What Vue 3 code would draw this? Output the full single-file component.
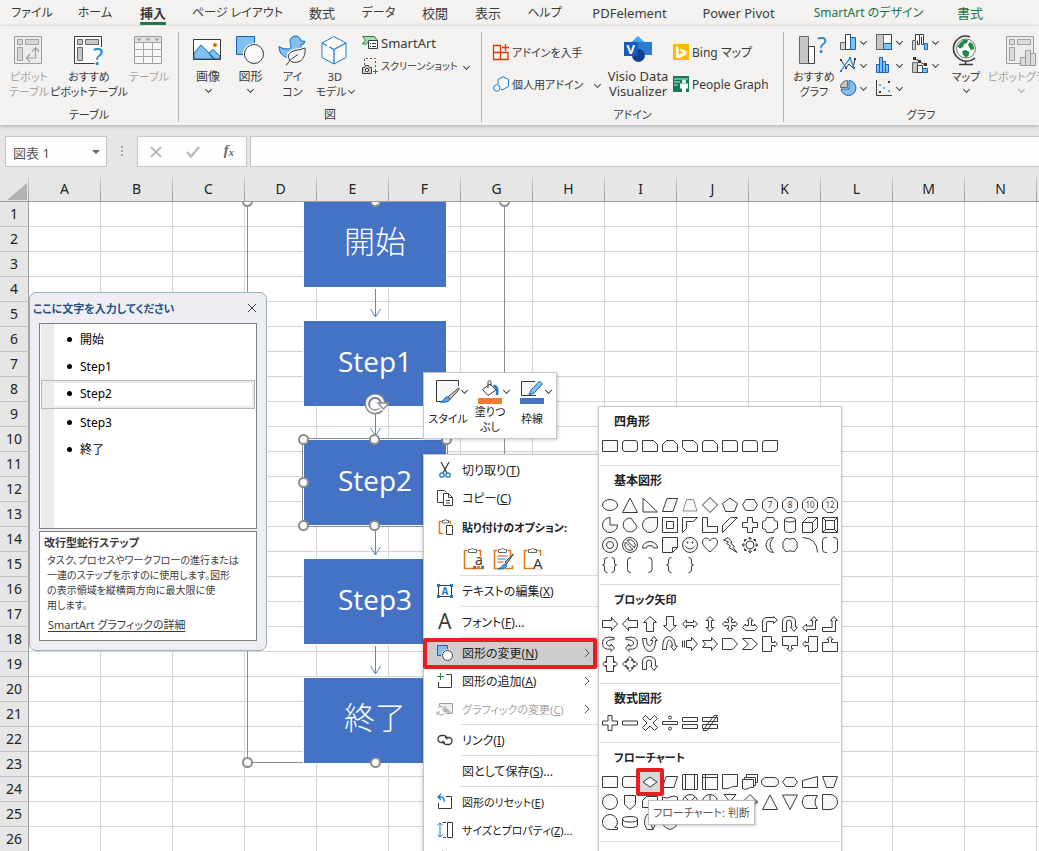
<script setup>
const tabs = [
  { text: 'ファイル', kind: 'kana' }, { text: 'ホーム', kind: 'kana' }, { text: '挿入', kind: 'active' }, { text: 'ページ レイアウト', kind: 'kana' },
  { text: '数式' }, { text: 'データ', kind: 'kana' }, { text: '校閲' }, { text: '表示' }, { text: 'ヘルプ', kind: 'kana' },
  { text: 'PDFelement' }, { text: 'Power Pivot' },
  { text: 'SmartArt のデザイン', kind: 'context kana' }, { text: '書式', kind: 'context' },
]

const columns = [...'ABCDEFGHIJKLMN', '']
const steps = ['開始', 'Step1', 'Step2', 'Step3', '終了']

const globe = `<circle cx="14" cy="12.500" r="9.500" fill="#fff" stroke="#767676"/>
<path d="M8 7l4-3.500 4 .5-1 3-3 1-1 3-3 1.500-2.500-2zM18 6l3 2 1.500 5-3.500 1-2-3-1-2.500zM10 15l4-1 3.500 2-1 4-3 1.500-2.500-3z" fill="#1f8a43"/>
<path d="M18 .8A13 13 0 0 0 4 5a12 12 0 0 0 1 16 13 13 0 0 0 18 1M13.500 25v3M7 28.500h14" fill="none" stroke="#3b3a39" stroke-width="1.500"/>`

const clip = `<path d="M3.500 3.500h-3v18h18v-3M13.500 3.500h3v6" fill="none" stroke="#e07b16" stroke-width="1.600"/><path d="M4.500 5.500v-3h2.500q1.500-3 3 0h2.500v3z" fill="#fff" stroke="#666"/>`

const icons = {
  pivot: `<path d="M.5.5h27v27H.5z" fill="#ececec" stroke="#9b9b9b"/><path d="M3.500 3.500h5v5h-5zM11.500 3.500h13v5h-13zM3.500 11.500h5v13h-5z" fill="#d6d6d6" stroke="#a0a0a0"/><path d="M16 18l-3.500 4 3.500 4M12.500 22h9V12M18 15.500l3.500-4 3.500 4" fill="none" stroke="#a0a0a0" stroke-width="1.200"/>`,
  pivotHint: `<path d="M.5.5h27v27H.5z" fill="#fafafa"/><path d="M27.500 11V.5H.5v27h20" fill="none" stroke="#3b3a39"/><path d="M3.500 3.500h5v5h-5zM11.500 3.500h13v5h-13zM3.500 11.500h5v13h-5z" fill="#c8c6c4" stroke="#666"/><text x="19" y="29" font-size="23" fill="#1e8bcd">?</text>`,
  table: `<path d="M.5.5h27v27H.5z" fill="#f7f7f7" stroke="#9b9b9b"/><path d="M1 1h26v5H1z" fill="#dedede"/><path d="M.5 6.500h27M.5 13.500h27M.5 20.500h27M9.500 6v21M18.500 6v21" stroke="#a6a6a6" fill="none"/><path d="M2.500 2.500h5L5 5zM11.500 2.500h5L14 5zM20.500 2.500h5L23 5z" fill="#9b9b9b"/>`,
  picture: `<path d="M.5 3.500h27v20H.5z" fill="#fff"/><path d="M1 17l7-8 14 14H1zM16 17l4-3.500 7 6.500v3H20z" fill="#83beec" stroke="#1068b5"/><circle cx="22" cy="9" r="2" fill="#e06c00"/><path d="M.5 3.500h27v20H.5z" fill="none" stroke="#3b3a39"/>`,
  shapes: `<path d="M.5.5h18v18H.5z" fill="#83beec" stroke="#1068b5"/><circle cx="18" cy="18" r="11" fill="#f3f2f1"/><circle cx="18" cy="18" r="9.500" fill="#fafafa" stroke="#3b3a39"/>`,
  duck: `<path d="M12 6a5.500 5.500 0 0 1 11-1l4 .3q-.5 3.500-4.500 3.700c0 2 2.500 3 2.500 6 0 6-5 7.500-9 7.500C6 22.500 1 18 1 10.500q4 3 9 2.500c4-.5 3-3 2-7z" fill="#83beec" stroke="#1068b5"/><path d="M12 25q-5-8 5-10.500 5-.5 10-2.500c1 9-4 17-14 13.500M8 29.500q5-8 12-11" fill="#f3f2f1" stroke="#f3f2f1" stroke-width="3.500"/><path d="M12 25q-5-8 5-10.500 5-.5 10-2.500c1 9-4 17-14 13.500" fill="#fafafa" stroke="#3b3a39"/><path d="M8 29.500q5-8 12-11" fill="none" stroke="#3b3a39"/>`,
  cube: `<path d="M14 .5l12 6.500v14.500L14 28 2 21.500V7z" fill="#fafafa" stroke="#1e7bc8"/><path d="M2 7l5 2.700M14 13.500V28M14 13.500L26 7M14 13.500l-4.500-2.400" fill="none" stroke="#1e7bc8" stroke-width="1.300"/>`,
  smartart: `<path d="M.5 1.500h12l3 4h-8l-3 3.500h-4l3-4z" fill="#a8dbb5" stroke="#218242"/><path d="M6.500 5.500h9v8h-9z" fill="#fff" stroke="#3b3a39"/><path d="M8 8.500h1M10 8.500h4M8 11.500h1M10 11.500h4" stroke="#3b3a39"/>`,
  screenshot: `<path d="M2.500 7V.5h11v10" fill="none" stroke="#555" stroke-dasharray="2 2"/><path d="M.5 9.500h2l1-2h3l1 2h2v6h-9z" fill="#d0d0d0" stroke="#3b3a39"/><circle cx="5" cy="12" r="1.700" fill="#fff" stroke="#3b3a39"/><path d="M13.500 11v5M11 13.500h5" stroke="#218242"/>`,
  getAddin: `<path d="M.5 1.500h7v14h-7zM.5 8.500h14.500v7H.5zM12.500 0v7M9 3.500h7" fill="none" stroke="#d83b01" stroke-width="1.300"/>`,
  myAddin: `<path d="M5 8V3.500L10 .7l5.500 2.800v7L10 13.500H8" fill="#fafafa" stroke="#1e7bc8"/><circle cx="3.800" cy="12" r="3.200" fill="#fafafa" stroke="#1e7bc8"/>`,
  visio: `<path d="M14 0l7 6.500-7 6.500-7-6.500z" fill="#41a5ee"/><path d="M14 6h14v13H14z" fill="#2b7cd3"/><circle cx="14.500" cy="19.500" r="6.500" fill="#103f91"/><path d="M0 6h14v14H0z" fill="#185abd"/><text x="2.500" y="18" font-size="13" font-weight="700" fill="#fff">V</text>`,
  bing: `<path d="M0 0h16v16H0z" fill="#ffb900"/><path d="M3 2l2.500 1v7.500l5-2-3-1.300L7 4.500l6.500 3v3l-8 4L3 13z" fill="#fff"/>`,
  people: `<path d="M0 0h16v16H0z" fill="#107c5a"/><path d="M1 3h14M1 6h6M1 9h4" stroke="#c5e6d8" stroke-width="1.200"/><circle cx="11" cy="5.500" r="2" fill="#fff"/><path d="M7 7.500h8v5h-2V16H9v-3.500H7z" fill="#fff"/>`,
  chartHint: `<path d="M.5.5h9v27h-9z" fill="#c8c6c4" stroke="#666"/><path d="M9.500 10.500h6v17h-6z" fill="#fff" stroke="#3b3a39"/><text x="18" y="17" font-size="22" fill="#1e8bcd">?</text>`,
  barChart: `<path d="M.5 8.500h5v7h-5z" fill="#d2d0ce" stroke="#666"/><path d="M5.500.5h5v15h-5z" fill="#fff" stroke="#3b3a39"/><path d="M10.500 3.500h5v12h-5z" fill="#83beec" stroke="#1068b5"/>`,
  treemap: `<path d="M.5.5h15v15H.5z" fill="#fff" stroke="#3b3a39"/><path d="M.5.5h7v15h-7z" fill="#c8c6c4" stroke="#666"/><path d="M7.500 9.500h8v6h-8z" fill="#83beec" stroke="#1068b5"/>`,
  waterfall: `<path d="M.5 15.500v-9h3v9z" fill="#d2d0ce" stroke="#666"/><path d="M3.500 6.500v-6h4v10h-2v-4M7.500.5h4v10h-2V3" fill="#fff" stroke="#3b3a39"/><path d="M12.500 9.500h3v6h-3z" fill="#83beec" stroke="#1068b5"/>`,
  lineChart: `<path d="M1 3l5 8 3-4 4 4 2-9" fill="none" stroke="#3b3a39"/><path d="M1 14l9-13 4 10" fill="none" stroke="#1e8bcd" stroke-width="1.300"/><path d="M0 2h2v2H0zM14 1h2v2h-2zM5 10h2v2H5z" fill="#3b3a39"/><path d="M0 13h2v2H0zM9 0h2v2H9zM13 10h2v2h-2z" fill="#1e7bc8"/>`,
  histogram: `<path d="M.5 15.500v-8h3v8zM3.500 15.500V.5h3v15zM6.500 15.500v-11h3v11zM9.500 15.500v-8h3v8z" fill="#83beec" stroke="#1068b5"/>`,
  combo: `<path d="M.5 5.500h5v10h-5z" fill="#c8c6c4" stroke="#666"/><path d="M5.500 8.500h5v7h-5z" fill="#fff" stroke="#3b3a39"/><path d="M10.500 11.500h5v4h-5z" fill="#83beec" stroke="#1068b5"/><path d="M2 1l6 4 5 3" fill="none" stroke="#3b3a39"/><path d="M1 0h3v3H1zM6 3h3v3H6zM12 6h3v3h-3z" fill="#3b3a39"/>`,
  pieChart: `<path d="M9 .5a7.500 7.500 0 1 1-8 8.500h8z" fill="#83beec" stroke="#1068b5"/><path d="M7.500 7.500h-7a7 7 0 0 1 7-7z" fill="#c8c6c4" stroke="#666"/>`,
  scatter: `<path d="M.5 0v15.500H16" fill="none" stroke="#3b3a39"/><path d="M3 11h2v2H3zM12 1h2v2h-2z" fill="#3b3a39"/><path d="M3 4h2v2H3zM7 7h2v2H7zM12 10h2v2h-2z" fill="#68aee6"/>`,
  map: globe,
  pivotChart: `<path d="M.5.5h27v27H.5z" fill="#ececec" stroke="#9b9b9b"/><path d="M3.500 3.500h5v5h-5zM11.500 3.500h13v5h-13zM3.500 11.500h5v13h-5z" fill="#dcdcdc" stroke="#a0a0a0"/><path d="M14.500 21.500h5v8h-5zM19.500 14.500h5v15h-5zM24.500 17.500h5v12h-5z" fill="#dcdcdc" stroke="#9b9b9b"/>`,
  style: `<path d="M22.500 6V.5H.5v21H5" fill="#f8f8f8" stroke="#3b3a39"/><path d="M22.500 8L12 17l2 2.500L23.500 9z" fill="#ccc" stroke="#3b3a39"/><path d="M4 22q4-1 5-4 3-3 5 1-1 4-10 3z" fill="#57a5dd" stroke="#1068b5"/>`,
  fill: `<path d="M4.500 9.500L12 4l6 6-8 5.500z" fill="#fafafa" stroke="#3b3a39"/><path d="M10 8V1.500q2-2 3 0V6" fill="none" stroke="#3b3a39"/><path d="M15.500 5.500q5 1 3.500 9.500" fill="none" stroke="#1e7bc8" stroke-width="2.500"/><path d="M0 18h24v6H0z" fill="#ed7d31"/>`,
  outline: `<path d="M15 1.500H1.500v14H16" fill="#f8f8f8" stroke="#3b3a39"/><path d="M9 15l2-5L19.500 1l3 3L14 13z" fill="#83beec" stroke="#1068b5"/><path d="M0 18h24v6H0z" fill="#4472c4"/>`,
  cut: `<path d="M4 0l6 11M12 0L6 11" fill="none" stroke="#3b3a39" stroke-width="1.300"/><circle cx="5" cy="13" r="2.200" fill="#fff" stroke="#1e7bc8" stroke-width="1.300"/><circle cx="11" cy="13" r="2.200" fill="#fff" stroke="#1e7bc8" stroke-width="1.300"/>`,
  copy: `<path d="M6.500 12.500h-6V.5h7l2 2" fill="none" stroke="#3b3a39"/><path d="M6.500 3.500h5l4 4v8h-9zM11.500 3.500v4h4M9 10.500h4M9 13h4" fill="#fff" stroke="#3b3a39"/>`,
  paste: `<path d="M6 14.500H2.500v-12H5M11 2.500h2.500V5" fill="none" stroke="#e07b16" stroke-width="1.500"/><path d="M5.500 4V1.500h1.500q1.500-2 3 0h1.500V4z" fill="#fff" stroke="#666"/><path d="M9.500 6.500h6v9h-6z" fill="#fff" stroke="#3b3a39"/>`,
  textEdit: `<path d="M1.500 2.500h13v11h-13z" fill="#fff" stroke="#3b3a39"/><path d="M0 1h3v3H0zM13 1h3v3h-3zM0 12h3v3H0zM13 12h3v3h-3z" fill="#1e7bc8"/><text x="4.500" y="11.500" font-size="10" font-weight="700" fill="#1e7bc8">A</text>`,
  font: `<text x="1" y="15" font-size="21" fill="#3b3a39">A</text>`,
  change: `<path d="M.5.5h10v10H.5z" fill="#83beec" stroke="#1068b5"/><circle cx="10.500" cy="10.500" r="6" fill="#fff" stroke="#d0d0d0"/><circle cx="10.500" cy="10.500" r="5" fill="#fff" stroke="#3b3a39"/>`,
  add: `<path d="M3.500 0v7M0 3.500h7" stroke="#218242"/><path d="M9 1.500h5.500v13h-13V9" fill="none" stroke="#3b3a39"/>`,
  graphic: `<path d="M2.500 5V2.500h13v10H9" fill="#efefef" stroke="#a0a0a0"/><path d="M6 11l3-4 6 5z" fill="#b4b4b4"/><path d="M1 7.500q1-3 4-2l3 3M7 12q-1 3-4 2l-3-3M8 5v4H5M0 14v-3h3" fill="none" stroke="#a0a0a0"/>`,
  link: `<path d="M8 10.500H4.500a3.500 3.500 0 0 1 0-7h2a3.500 3.500 0 0 1 3.500 4M8 5.500h3.500a3.500 3.500 0 0 1 0 7h-2a3.500 3.500 0 0 1-3.500-4" fill="none" stroke="#3b3a39" stroke-width="1.300"/>`,
  reset: `<path d="M9 2.500h5.500v12h-13V9" fill="none" stroke="#3b3a39"/><path d="M4 0L1 3l3 3M1 3h3q4 1 3 5" fill="none" stroke="#1e7bc8" stroke-width="1.300"/>`,
  size: `<path d="M.5 3.500L3 .8l2.500 2.700M3 1v14M.5 12.500L3 15.200l2.500-2.700" fill="none" stroke="#1e7bc8"/><path d="M6 .5h3M6 15.500h3" stroke="#3b3a39" /><path d="M10.500.5h5v15h-5z" fill="#fff" stroke="#3b3a39"/>`,
  format: `<path d="M4 3q1-4 4 0M1.500 5.500h13v10h-13z" fill="#fafafa" stroke="#3b3a39"/>`,
  pasteTheme: clip + `<text x="11" y="18" font-size="14" fill="#3b3a39">a</text><path d="M9 19h3v3H9z" fill="#e8373e"/><path d="M13 19h3v3h-3z" fill="#e07b16"/><path d="M17 19h3v3h-3z" fill="#1e8bcd"/>`,
  pasteKeep: clip + `<path d="M3.500 9h10" stroke="#e8373e"/><path d="M3.500 12h8" stroke="#1e7bc8"/><path d="M3.500 15h6" stroke="#e8373e"/><path d="M19.500 7L11 15l1.500 2z" fill="#bbb" stroke="#3b3a39"/><path d="M4 22q4-1 5-4 3-2 4 .5Q12 22 4 22z" fill="#57a5dd" stroke="#1068b5"/>`,
  pasteText: clip + `<path d="M10 9h10v13H10z" fill="#fff"/><text x="9" y="22" font-size="15" fill="#3b3a39">A</text>`,
}

const charts = ['barChart', 'treemap', 'waterfall', 'lineChart', 'histogram', 'combo', 'pieChart', 'scatter']

const menuTop = [
  { icon: 'cut', text: '切り取り', key: 'T' },
  { icon: 'copy', text: 'コピー', key: 'C' },
]
const menuRest = [
  { icon: 'textEdit', text: 'テキストの編集', key: 'X', line: true },
  { icon: 'font', text: 'フォント', key: 'F', tail: '...', line: true },
  { icon: 'change', text: '図形の変更', key: 'N', sub: true, hot: true, line: true },
  { icon: 'add', text: '図形の追加', key: 'A', sub: true },
  { icon: 'graphic', text: 'グラフィックの変更', key: 'C', sub: true, off: true, kana: true },
  { icon: 'link', text: 'リンク', key: 'I', line: true },
  { text: '図として保存', key: 'S', tail: '...', line: true },
  { icon: 'reset', text: '図形のリセット', key: 'E', line: true, kana: true },
  { icon: 'size', text: 'サイズとプロパティ', key: 'Z', tail: '...', kana: true },
]

const octagon = 'M5 .5h6l4.500 4.500v6L11 15.500H5L.5 11V5z'
const rect = 'M.5 2.500h15v11H.5z'
const circle = 'M.5 8a7.500 7.500 0 1 0 15 0a7.500 7.500 0 1 0-15 0z'
const gallery = [
  { name: '四角形', shapes: [
    rect,
    'M3 2.500h10q2.500 0 2.500 2.500v6q0 2.500-2.500 2.500H3Q.5 13.500.5 11V5Q.5 2.500 3 2.500z',
    'M.5 2.500h11l4 4v7H.5z',
    'M.5 6.500l4-4h7l4 4v7H.5z',
    'M.5 2.500h11l4 4v7h-11l-4-4z',
    'M3 2.500h8.500l4 4v7H.5V5q0-2.500 2.500-2.500z',
    'M.5 2.500H13q2.500 0 2.500 2.500v8.500H.5z',
    'M3 2.500h10q2.500 0 2.500 2.500v8.500H.5V5Q.5 2.500 3 2.500z',
    'M3 2.500h12.500V11q0 2.500-2.500 2.500H.5V5q0-2.500 2.500-2.500z',
  ] },
  { name: '基本図形', shapes: [
    'M.5 8a7.500 5.500 0 1 0 15 0a7.500 5.500 0 1 0-15 0z',
    'M8 1l7.500 14.500H.5z',
    'M1 1v14h14.500z',
    'M5 1.500h10.500L11 14.500H.5z',
    { d: 'M4.500 2.500h7l3.500 11.500H1z', pale: true },
    'M8 .5L15.500 8 8 15.500.5 8z',
    'M8 1l7.500 5.500-3 8h-9l-3-8z',
    'M4 2.500h8L15.500 8 12 13.500H4L.5 8z',
    { d: octagon, label: '7' }, { d: octagon, label: '8' }, { d: octagon, label: '10' }, { d: octagon, label: '12' },
    'M8 .5A7.500 7.500 0 1 0 15.500 8H8z',
    'M9 1A7 7 0 1 0 15 9.500z',
    'M15.500.5V8A7.500 7.500 0 1 1 8 .5z',
    'M.5.5h15v15H.5zM4.500 4.500v7h7v-7z',
    'M.5.5h15l-4 4h-7v7l-4 4z',
    'M.5.5h5v9h10v6H.5z',
    'M8.500.5h7L.5 15.500v-7z',
    'M5.500.5h5v5h5v5h-5v5h-5v-5h-5v-5h5z',
    'M4.500.5h7a4 4 0 0 0 4 4v7a4 4 0 0 0-4 4h-7a4 4 0 0 0-4-4v-7a4 4 0 0 0 4-4z',
    'M2.500 3q0-2.500 5.500-2.500T13.500 3v10q0 2.500-5.500 2.500T2.500 13zM2.500 3q0 2 5.500 2t5.500-2',
    'M.5 5.500h10v10H.5zM.5 5.500l5-5h10l-5 5M15.500.5v10l-5 5',
    'M.5.5h15v15H.5zM3.500 3.500h9v9h-9zM.5.5l3 3M15.500.5l-3 3M.5 15.500l3-3M15.500 15.500l-3-3',
    circle + 'M4.500 8a3.500 3.500 0 1 0 7 0a3.500 3.500 0 1 0-7 0z',
    circle + 'M5 3.500a5.500 5.500 0 0 1 7.500 7.500zM3.500 5a5.500 5.500 0 0 0 7.500 7.500z',
    'M.5 11a7.500 6.500 0 0 1 15 0h-4a3.500 2.500 0 0 0-7 0z',
    'M.5.5h15v10l-5 5H.5zM15.500 10.500h-5v5',
    circle + 'M3.500 9.500q4.500 5 9 0M5 5h1v1H5zM10 5h1v1h-1z',
    'M8 15Q.5 9 .5 5C.5 0 7 0 8 4c1-4 7.500-4 7.500 1Q15.500 9 8 15z',
    'M6 .5L10 5 8.500 6l4 3.500-1.500 1 4 5-8-5L8.500 9 4.500 6.500 6.500 5l-5-2z',
    'M4 8a4 4 0 1 0 8 0a4 4 0 1 0-8 0zM8 0l1.500 2h-3zM8 16l1.500-2h-3zM0 8l2-1.500v3zM16 8l-2-1.500v3zM2.500 2.500h2l-2 2zM13.500 2.500h-2l2 2zM2.500 13.500h2l-2-2zM13.500 13.500h-2l2-2z',
    'M11.500.5a7.500 7.500 0 1 0 0 15q-7-7.500 0-15z',
    'M2.500 3.500q0-2.500 3-2Q8 3 10.500 1.500q3-.5 3 2 2.500 1 1.500 4.500 1 3.500-1.500 4.500 0 2.500-3 2-2.500-1.500-5 0-3 .5-3-2Q0 11.500 1 8 0 4.500 2.500 3.500z',
    { d: 'M.5.5Q15 1 15.500 15.500', open: true },
    { d: 'M5 .5H3.500q-3 0-3 3v9q0 3 3 3H5M11 .5h1.500q3 0 3 3v9q0 3-3 3H11', open: true },
    { d: 'M5.500.5q-3 0-3 2.500v3q0 2-2 2 2 0 2 2v3q0 2.500 3 2.500M9.500.5q3 0 3 2.500v3q0 2 2 2-2 0-2 2v3q0 2.500-3 2.500', open: true },
    { d: 'M9 .5q-3.500 0-3.500 3v9q0 3 3.500 3', open: true },
    { d: 'M6.500.5q3.500 0 3.500 3v9q0 3-3.500 3', open: true },
    { d: 'M9.500.5q-3 0-3 2.500v3q0 2-2 2 2 0 2 2v3q0 2.500 3 2.500', open: true },
    { d: 'M6.500.5q3 0 3 2.500v3q0 2 2 2-2 0-2 2v3q0 2.500-3 2.500', open: true },
  ] },
  { name: 'ブロック矢印', kana: true, shapes: [
    'M.5 4.500h9v-3l6 6.500-6 6.500v-3h-9z',
    'M15.500 4.500h-9v-3L.5 8l6 6.500v-3h9z',
    'M4.500 15.500v-9h-3L8 .5l6.500 6h-3v9z',
    'M4.500.5v9h-3L8 15.500l6.500-6h-3v-9z',
    'M.5 8l4-4v2.500h7V4l4 4-4 4V9.500h-7V12z',
    'M8 .5l4 4H9.500v7H12l-4 4-4-4h2.500v-7H4z',
    'M8 .5l3 3H9.500v3h3V5l3 3-3 3V9.500h-3v3H11l-3 3-3-3h1.500v-3h-3V11l-3-3 3-3v1.500h3v-3H5z',
    'M8 1.500l3 3H9.500v5h3V8l3 3.500-3 3H3.500l-3-3 3-3.500v1.500h3v-5H5z',
    'M.5 15.500V6q0-4.500 4.500-4.500h6.500v-1l4 3.500-4 3.500v-2H6q-1.500 0-1.500 1.500v8.500z',
    'M.5 15.500V6q0-5.500 6.500-5.500T13.500 6v5h2L12 15.500 8.500 11h1V7q0-3-2.500-3T4.500 7v8.500z',
    'M12 .5l3.500 4h-2v9h-9v2L.5 12l4-4v2h6V4.500h-2z',
    'M12 .5l3.500 4h-2v11H.5v-4h9.500v-7H8.500z',
    'M12 1.500Q.5-.5.5 7T9 13v2.500l3.500-3.500L9 8v2Q4.500 10 4.500 7T12 3.500z',
    'M4 1.500Q15.500-.5 15.500 7T7 13v2.500L3.500 12 7 8v2q4.500 0 4.500-3T4 3.500z',
    'M.5 2.500h4q0 7 3 7t3-5h-2L12 .5l3.500 4h-2q0 11-6 11t-7-13z',
    'M.5 13.500q0-13 6-13t7 9.500h2L12 14.500 8.500 10h2q-.5-6-3-6t-3 9.500z',
    'M.5 4.500v7M2.500 4.500v7M4.500 4.500h5v-3l6 6.500-6 6.500v-3h-5z',
    'M.5 4.500h9v-3l6 6.500-6 6.500v-3h-9l3-3.500z',
    'M.5 2.500h10l5 5.500-5 5.500H.5z',
    'M.5 2.500h9l6 5.500-6 5.500h-9l6-5.500z',
    'M.5.5h9v6h3V5l3 3-3 3V9.500h-3v6h-9z',
    'M.5.5h15v9h-6v3H11l-3 3-3-3h1.500v-3h-6z',
    'M15.500.5h-9v6h-3V5l-3 3 3 3V9.500h3v6h9z',
    'M.5 15.500h15v-9h-6v-3H11l-3-3-3 3h1.500v3h-6z',
    'M4.500.5h7v6h1V5l3 3-3 3V9.500h-1v6h-7v-6h-1V11l-3-3 3-3v1.500h1z',
    'M8 .5l3 3H9.500v1h2v2h1V5l3 3-3 3V9.500h-1v2h-2v1H11l-3 3-3-3h1.500v-1h-2v-2h-1V11l-3-3 3-3v1.500h1v-2h2v-1H5z',
    'M.5 13.500V6q0-5.500 6.500-5.500T13.500 6v4h2L12 14.500 8.500 10h1V7q0-3-2.500-3T4.500 7v6.500z',
  ] },
  { name: '数式図形', shapes: [
    'M6 .5h4V6h5.500v4H10v5.500H6V10H.5V6H6z',
    'M.5 6h15v4H.5z',
    'M3.500.5L8 5l4.500-4.500 3 3L11 8l4.500 4.500-3 3L8 11l-4.500 4.500-3-3L5 8 .5 3.500z',
    'M.5 6.500h15v3H.5zM6.500 2.500a1.500 1.500 0 1 0 3 0a1.500 1.500 0 1 0-3 0zM6.500 13.500a1.500 1.500 0 1 0 3 0a1.500 1.500 0 1 0-3 0z',
    'M.5 2.500h15v4H.5zM.5 9.500h15v4H.5z',
    'M.5 2.500h15v4H.5zM.5 9.500h15v4H.5zM12 .5h3.500L5 15.500H1z',
  ] },
  { name: 'フローチャート', kana: true, shapes: [
    rect,
    'M3 2.500h10q2.500 0 2.500 2.500v6q0 2.500-2.500 2.500H3Q.5 13.500.5 11V5Q.5 2.500 3 2.500z',
    { d: 'M8 3l7 5-7 5-7-5z', picked: true },
    'M4 2.500h11.500l-3.500 11H.5z',
    'M.5.5h15v15H.5zM3.500.5v15M12.500.5v15',
    'M.5.5h15v15H.5zM3.500.5v15M.5 3.500h15',
    'M.5.5h15v12q-4-1-7 1t-8 1z',
    'M4.500 3.500v-3h11v8h-2M2.500 5.500v-2h11v8h-2M.5 5.500h11v8q-3-1-5.500 1t-5.500 0z',
    'M4 3.500h8a4.500 4.500 0 0 1 0 9H4a4.500 4.500 0 0 1 0-9z',
    'M4 3.500h8L15.500 8 12 12.500H4L.5 8z',
    'M.5 6.500l15-4v11H.5z',
    'M.5 2.500h15l-4 11h-7z',
    circle,
    'M2.500 1.500h11v9l-5.500 5-5.500-5z',
    'M4.500 2.500h11v11H.5v-7z',
    'M.5 3q4 2 7.500 0t7.500 0v10q-4-2-7.500 0t-7.500 0z',
    circle + 'M3 3l10 10M13 3L3 13',
    circle + 'M8 .5v15M.5 8h15',
    'M2 .5h12l-12 15h12z',
    'M8 .5L15.500 8 8 15.500.5 8zM.5 8h15',
    'M8 1l7.500 14.500H.5z',
    'M.5 1h15L8 15.500z',
    'M5 1.500h10.500q-5 6.500 0 13H5Q.5 14 .5 8T5 1.500z',
    'M.5.5H8a7.500 7.500 0 0 1 0 15H.5z',
    'M15.500 15.500H8A7.500 7.500 0 1 1 13 13.500h2.500z',
    'M.5 5q0-2.500 7.500-2.500T15.500 5v6q0 2.500-7.500 2.500T.5 11zM.5 5q0 3 7.500 3t7.500-3',
    'M5 .5h6q4.500 7.500 0 15H5q-5-7.500 0-15zM11 .5q-4 7.500 0 15',
    'M4 1.500h8L15.500 8q0 5-7.500 7.500Q.5 13 .5 8z',
  ] },
].map(s => ({ ...s, shapes: s.shapes.map(x => (typeof x === 'string' ? { d: x } : x)) }))
</script>

<template>
  <div class="app">
    <nav class="tabs">
      <button v-for="t in tabs" :key="t.text" :class="['tab', t.kind]"><span>{{ t.text }}</span></button>
    </nav>

    <div class="ribbon">
      <section class="group g-table">
        <div class="body">
          <button class="big kana off"><svg width="30" height="30" v-html="icons.pivot" /><span>ピボット<br>テーブル</span></button>
          <button class="big kana"><svg width="30" height="30" v-html="icons.pivotHint" /><span>おすすめ<br>ピボットテーブル</span></button>
          <button class="big kana off"><svg width="30" height="30" v-html="icons.table" /><span>テーブル</span></button>
        </div>
        <div class="caption kana">テーブル</div>
      </section>

      <section class="group g-figure">
        <div class="body">
          <button class="big"><svg width="30" height="30" v-html="icons.picture" /><span>画像</span><i class="chev"></i></button>
          <button class="big"><svg width="30" height="30" v-html="icons.shapes" /><span>図形</span><i class="chev"></i></button>
          <button class="big kana"><svg width="30" height="30" v-html="icons.duck" /><span>アイ<br>コン</span></button>
          <button class="big kana"><svg width="30" height="30" v-html="icons.cube" /><span>3D<br>モデル <i class="chev"></i></span></button>
          <div class="stack">
            <button class="small latin"><svg width="16" height="16" v-html="icons.smartart" />SmartArt</button>
            <button class="small narrow"><svg width="16" height="16" v-html="icons.screenshot" />スクリーンショット<i class="chev"></i></button>
          </div>
        </div>
        <div class="caption">図</div>
      </section>

      <section class="group g-addin">
        <div class="body">
          <div class="stack wide">
            <button class="small kana"><svg width="16" height="16" v-html="icons.getAddin" />アドインを入手</button>
            <button class="small kana spread"><svg width="16" height="16" v-html="icons.myAddin" />個人用アドイン<i class="chev"></i></button>
          </div>
          <button class="big latin"><svg width="28" height="30" v-html="icons.visio" /><span>Visio Data<br>Visualizer</span></button>
          <div class="stack wide">
            <button class="small"><svg width="16" height="16" v-html="icons.bing" />Bing マップ</button>
            <button class="small"><svg width="16" height="16" v-html="icons.people" />People Graph</button>
          </div>
        </div>
        <div class="caption kana">アドイン</div>
      </section>

      <section class="group g-chart">
        <div class="body">
          <button class="big kana"><svg width="30" height="30" v-html="icons.chartHint" /><span>おすすめ<br>グラフ</span></button>
          <div class="charts">
            <button v-for="c in charts" :key="c" class="mini" :aria-label="c"><svg width="16" height="16" v-html="icons[c]" /><i class="chev"></i></button>
          </div>
          <button class="big kana"><svg width="28" height="30" v-html="icons.map" /><span>マップ</span><i class="chev"></i></button>
          <button class="big kana off"><svg width="30" height="30" v-html="icons.pivotChart" /><span>ピボットグラフ</span><i class="chev"></i></button>
        </div>
        <div class="caption kana">グラフ</div>
      </section>
    </div>

    <div class="formula">
      <div class="namebox">
        <input value="図表 1" aria-label="名前ボックス">
        <button aria-label="名前の一覧"><i class="caret"></i></button>
      </div>
      <svg class="dots" width="4" height="12"><path d="M1 1h2v2H1zM1 5h2v2H1zM1 9h2v2H1z" fill="#a6a6a6" /></svg>
      <div class="fxbox">
        <button aria-label="キャンセル"><svg width="12" height="12"><path d="M1 1l10 10M11 1L1 11" stroke="#b8b8b8" stroke-width="1.800" /></svg></button>
        <button aria-label="入力"><svg width="14" height="12"><path d="M1 6l4 4.500L13 1" fill="none" stroke="#b8b8b8" stroke-width="2.200" /></svg></button>
        <button class="fx" aria-label="関数の挿入">f<sub>x</sub></button>
      </div>
      <input class="fbar" aria-label="数式バー">
    </div>

    <main class="sheet">
      <table>
        <thead>
          <tr>
            <th class="corner"><svg width="20" height="17"><path d="M20 0v17H0z" fill="#b2b2b2" /></svg></th>
            <th v-for="c in columns" :key="c">{{ c }}</th>
          </tr>
        </thead>
        <tbody>
          <tr v-for="r in 26" :key="r">
            <th>{{ r }}</th>
            <td v-for="c in columns" :key="c"></td>
          </tr>
        </tbody>
      </table>

      <div class="canvas">
        <div class="frame">
          <i class="knob k-tl"></i><i class="knob k-tc"></i><i class="knob k-tr"></i>
          <i class="knob k-bl"></i><i class="knob k-bc"></i>
          <div class="flow">
            <template v-for="(s, i) in steps" :key="s">
              <svg v-if="i" class="arrow" width="14" height="32"><path d="M7.500 1v27M2.500 21l5 8 5-8" fill="none" stroke="#5b84cc" /></svg>
              <div :class="['node', { selected: s === 'Step2', kanji: i === 0 || i === 4 }]">
                {{ s }}
                <template v-if="s === 'Step2'">
                  <i class="knob k-tl"></i><i class="knob k-tc"></i><i class="knob k-tr"></i>
                  <i class="knob k-ml"></i><i class="knob k-bl"></i><i class="knob k-bc"></i>
                  <svg class="rotate" width="26" height="22"><circle cx="11" cy="11" r="5" fill="#fff" /><path d="M17 16.500A8 8 0 1 1 19 9" fill="none" stroke="#8c8c8c" stroke-width="5" /><path d="M17 16A8 8 0 1 1 19 10" fill="none" stroke="#fff" stroke-width="2" /><path d="M14 10h11l-5.500 6z" fill="#fff" stroke="#8c8c8c" stroke-width="1.500" /></svg>
                </template>
              </div>
            </template>
          </div>
        </div>

        <aside class="pane">
          <header>
            <h2>ここに文字を入力してください</h2>
            <button aria-label="閉じる"><svg width="10" height="10"><path d="M1 1l8 8M9 1L1 9" stroke="#444" /></svg></button>
          </header>
          <ul>
            <li v-for="s in steps" :key="s" :class="{ on: s === 'Step2' }">{{ s }}</li>
          </ul>
          <div class="about">
            <h3>改行型蛇行ステップ</h3>
            <p>タスク、プロセスやワークフローの進行または<br>一連のステップを示すのに使用します。図形<br>の表示領域を縦横両方向に最大限に使<br>用します。</p>
            <a href="#">SmartArt グラフィックの詳細</a>
          </div>
        </aside>

        <div class="toolbar">
          <button><span class="pic"><svg width="24" height="24" v-html="icons.style" /><i class="chev"></i></span><span class="one">スタイル</span></button>
          <button><span class="pic"><svg width="24" height="24" v-html="icons.fill" /><i class="chev"></i></span><span>塗りつ<br>ぶし</span></button>
          <button><span class="pic"><svg width="24" height="24" v-html="icons.outline" /><i class="chev"></i></span><span class="one">枠線</span></button>
        </div>

        <div class="menu">
          <button v-for="m in menuTop" :key="m.text" class="item"><svg width="16" height="16" v-html="icons[m.icon]" /><span>{{ m.text }}(<u>{{ m.key }}</u>)</span></button>
          <div class="item head kana"><svg width="16" height="16" v-html="icons.paste" /><b>貼り付けのオプション:</b></div>
          <div class="pastes">
            <button v-for="p in ['pasteTheme', 'pasteKeep', 'pasteText']" :key="p" :aria-label="p"><svg width="22" height="24" v-html="icons[p]" /></button>
          </div>
          <template v-for="m in menuRest" :key="m.text">
            <hr v-if="m.line">
            <button :class="['item', { hot: m.hot, off: m.off, kana: m.kana }]">
              <svg width="16" height="16" v-html="m.icon ? icons[m.icon] : ''" />
              <span>{{ m.text }}(<u>{{ m.key }}</u>){{ m.tail }}</span>
              <svg v-if="m.sub" class="more" width="6" height="10"><path d="M1 1l4 4-4 4" fill="none" stroke="#555" /></svg>
            </button>
          </template>
          <button class="item" aria-label="書式設定"><svg width="16" height="16" v-html="icons.format" /></button>
        </div>

        <div class="gallery">
          <section v-for="g in gallery" :key="g.name">
            <h4 :class="{ kana: g.kana }">{{ g.name }}</h4>
            <div class="shapes">
              <button v-for="(s, i) in g.shapes" :key="i" :class="{ picked: s.picked }" :aria-label="g.name + (i + 1)">
                <svg width="20" height="20" viewBox="-2 -2 20 20">
                  <path :d="s.d" :fill="s.open ? 'none' : '#f8f8f8'" fill-rule="evenodd" :stroke="s.pale ? '#8a8a8a' : '#3b3a39'" />
                  <text v-if="s.label" x="8" y="11" text-anchor="middle" font-size="8" fill="#444">{{ s.label }}</text>
                </svg>
                <span v-if="s.picked" class="tip">フローチャート: 判断</span>
              </button>
            </div>
          </section>
        </div>
      </div>
    </main>
  </div>
</template>

<style>
html, body { overflow: hidden; }
</style>

<style scoped>
.app {
  height: 100vh;
  display: flex;
  flex-direction: column;
  overflow: hidden;
  background: #e6e6e6;
  color: #3b3a39;
  font: 12px/15px "Noto Sans", "Noto Sans CJK JP", sans-serif;
  font-feature-settings: "palt";
}
.app * { box-sizing: border-box; }
button, input {
  font: inherit;
  font-feature-settings: inherit;
  color: inherit;
  background: none;
  border: 0;
  padding: 0;
  margin: 0;
  white-space: nowrap;
}
h2, h3, h4, p, ul { margin: 0; padding: 0; font-size: 12px; }
svg { display: block; flex: none; overflow: visible; }
.chev {
  display: inline-block;
  flex: none;
  width: 5px;
  height: 5px;
  border: solid #444;
  border-width: 0 1px 1px 0;
  transform: rotate(45deg);
}

.tabs {
  flex: none;
  display: grid;
  grid-template-columns: 64px 62px 54px 115px 54px 59px 54px 52px 61px 109px 109px 151px 52px;
  height: 26px;
  background: #f3f2f1;
  font-size: 13px;
}
.tab { display: flex; justify-content: center; }
.tab span { height: 25px; padding-top: 5px; line-height: 16px; }
.tab.active span { font-weight: 700; border-bottom: 3px solid #217346; }
.tab.context { color: #217346; }
.tab.kana { font-size: 12px; }

.ribbon {
  position: relative;
  flex: none;
  display: flex;
  height: 99px;
  padding-top: 6px;
  background: #f3f2f1;
  box-shadow: 0 1px 4px #a8a8a8;
}
.group { flex: none; height: 90px; border-right: 1px solid #b3b0ad; display: flex; flex-direction: column; }
.g-table { width: 179px; }
.g-figure { width: 303px; }
.g-addin { width: 302px; }
.g-chart { flex: 1 0 255px; border: 0; }
.body { display: grid; height: 77px; padding-top: 3px; }
.g-table .body { grid-template-columns: 58px 62px 58px; }
.g-figure .body { grid-template-columns: 42px 43px 41px 44px 1fr; padding-left: 8px; }
.g-addin .body { grid-template-columns: 126px 60px 1fr; }
.g-chart .body { grid-template-columns: 52px 108px 36px 74px; padding-left: 4px; }
.caption { text-align: center; line-height: 15px; }
.big { display: flex; flex-direction: column; align-items: center; min-width: 0; }
.big > svg { height: 30px; margin: 1px 0 3px; }
.big > .chev { margin-top: 3px; }
.big span { text-align: center; }
.big span .chev { margin-bottom: 3px; }
.off { color: #a6a4a2; }
.off .chev { border-color: #a6a4a2; }
.stack { display: flex; flex-direction: column; gap: 7px; padding-left: 5px; }
.stack.wide { gap: 16px; padding: 9px 0 0 11px; }
.big + .stack.wide { padding-left: 5px; }
.small { display: flex; align-items: center; gap: 3px; height: 16px; }
.small.narrow { font-size: 10px; }
.small.narrow .chev { margin-left: 3px; }
.small.spread .chev { margin-left: auto; margin-right: 8px; }
.kana, h4.kana { font-size: 11px; }
.latin { font-size: 13px; }
.charts { display: grid; grid-template-columns: repeat(3, 36px); grid-auto-rows: 23px; margin-top: -1px; }
.mini { display: flex; align-items: flex-start; gap: 5px; }
.mini .chev { margin-top: 5px; }

.formula { flex: none; display: flex; height: 52px; padding: 11px 0 10px 5px; }
.namebox, .fxbox, .fbar { border: 1px solid #c6c6c6; background: #fdfdfd; }
.namebox { width: 102px; display: flex; }
.namebox input { flex: 1; min-width: 0; padding: 4px 0 0 7px; font-size: 13px; color: #555; }
.namebox button { width: 20px; display: flex; align-items: center; justify-content: center; }
.caret { border: 4px solid transparent; border-top-color: #666; border-bottom: 0; }
.dots { margin: 9px 13px 0 13px; }
.fxbox { width: 110px; display: flex; justify-content: space-around; align-items: center; }
.fx { font: italic 700 14px/16px "Liberation Serif", serif; color: #666; }
.fx sub { font-size: 11px; vertical-align: -1px; }
.fbar { flex: 1; margin-left: 3px; border-right: 0; padding-left: 6px; min-width: 0; }

.sheet { position: relative; flex: 1; min-height: 0; overflow: hidden; }
table { table-layout: fixed; border-collapse: separate; border-spacing: 0; width: 1109px; background: #fff; }
th { background: #e6e6e6; font-weight: 400; color: #222; font-size: 14px; line-height: 20px; padding: 0; border: 0 solid #9f9f9f; border-width: 0 1px 1px 0; height: 25px; width: 72px; }
tr th:first-child { width: 29px; }
thead th { border-image: linear-gradient(#d0d0d0, #999) 1; }
tbody th { border-bottom-color: #c0c0c0; }
td { padding: 0; border: 0 solid #d4d4d4; border-width: 0 1px 1px 0; }
.corner svg { margin: 4px 0 0 7px; }

.canvas { position: absolute; inset: 25px 0 0 29px; overflow: hidden; }
.frame { position: absolute; left: 218px; top: -1px; width: 258px; height: 562px; border: 1px solid #8c8c8c; }
.flow { display: flex; flex-direction: column; align-items: center; margin: -1px 1px 0 -1px; }
.node {
  position: relative;
  display: flex;
  align-items: center;
  justify-content: center;
  width: 144px;
  height: 87px;
  padding-bottom: 6px;
  background: #4472c4;
  border: 1px solid #fff;
  color: #fff;
  font: 28px/34px "Open Sans", "Noto Sans CJK JP", sans-serif;
}
.node.kanji { font-size: 31px; font-weight: 300; padding-bottom: 8px; }
.node.selected { outline: 1px solid #8c8c8c; }
.arrow { height: 32px; }
.knob { position: absolute; z-index: 1; width: 11px; height: 11px; border: 2px solid #8c8c8c; border-radius: 50%; background: #fff; }
.k-tl, .k-tc, .k-tr { top: -6px; }
.k-bl, .k-bc { bottom: -6px; }
.k-tl, .k-bl, .k-ml { left: -6px; }
.k-tc, .k-bc { left: calc(50% - 6px); }
.k-tr { right: -6px; }
.k-ml { top: calc(50% - 6px); }
.rotate { position: absolute; left: 60px; top: -47px; }

.pane { position: absolute; z-index: 2; left: 0; top: 90px; width: 238px; height: 359px; padding: 0 9px; border: 1px solid #9cb0b8; border-radius: 7px; background: #eeedf3; }
.pane header { display: flex; justify-content: space-between; align-items: center; height: 30px; margin: 0 -3px 0 -6px; }
.pane h2 { font-size: 11px; color: #1e5288; white-space: nowrap; }
.pane header button { padding: 3px; }
.pane ul { list-style: none; height: 206px; padding: 2px 1px; border: 1px solid #808080; background: linear-gradient(90deg, transparent 1px, #ebebeb 1px, #ebebeb 14px, #fff 14px); background-color: #fff; color: #000; }
.pane li { height: 27px; padding-left: 38px; line-height: 26px; border: 1px solid transparent; position: relative; }
.pane li::before { content: ""; position: absolute; left: 25px; top: 10px; width: 5px; height: 5px; border-radius: 50%; background: #000; }
.pane li.on { height: 29px; border-color: #b8b8b8; box-shadow: inset -2px 0 #ebebeb, inset 0 -2px #ebebeb, inset 0 2px #ebebeb; }
.about { margin-top: 2px; height: 110px; padding: 3px 0 0 4px; border: 1px solid #808080; background: #fff; white-space: nowrap; }
.about h3 { font-size: 11px; }
.about p { padding: 3px 0 4px 3px; font-size: 10px; }
.about a { margin-left: 4px; font-size: 11px; color: inherit; text-underline-offset: 2px; }

.toolbar { position: absolute; z-index: 2; left: 394px; top: 170px; display: grid; grid-template-columns: repeat(3, 42px); width: 134px; height: 67px; padding: 7px 3px 0; background: #fff; border: 1px solid #c6c6c6; box-shadow: 1px 1px 3px #0003; color: #222; font-size: 11px; }
.toolbar button { display: flex; flex-direction: column; align-items: center; }
.toolbar .pic { display: flex; gap: 2px; padding-left: 6px; }
.toolbar .pic .chev { margin-top: 8px; }
.toolbar .one { padding-top: 7px; }

.menu { position: absolute; z-index: 2; left: 394px; top: 252px; width: 178px; padding-top: 1px; background: #fff; border: 1px solid #c6c6c6; box-shadow: 0 1px 4px #0004; color: #222; }
.menu .item { position: relative; display: flex; align-items: center; gap: 9px; width: 100%; height: 28px; padding-left: 13px; text-align: left; }
.menu .head { height: 30px; }
.menu .off { color: #a6a4a2; }
.pastes { display: flex; gap: 8px; height: 32px; padding: 2px 0 0 40px; }
hr { height: 3px; margin: 0 0 0 36px; border: solid #fff; border-width: 1px 0; background: #dcdcdc; }
.item .more { position: absolute; right: 10px; }
.item.hot { background: #cdcdcd; }
.item.hot::after { content: ""; position: absolute; inset: -1px 3px -2px -1px; border: 4px solid #ed1c24; border-radius: 2px; }

.gallery { position: absolute; z-index: 3; left: 569px; top: 204px; width: 244px; bottom: -20px; background: #fff; border: 1px solid #c6c6c6; box-shadow: 0 1px 3px #0003; color: #222; }
.gallery section { padding: 0 1px 9px; border-bottom: 1px solid #dcdcdc; margin: 0 1px; }
.gallery h4 { height: 29px; padding-left: 13px; line-height: 30px; }
.shapes { display: grid; grid-template-columns: repeat(12, 20px); margin: 0 -1px; }
.shapes button { position: relative; height: 20px; }
.shapes .picked { background: #d8d8d8; z-index: 1; }
.picked::after { content: ""; position: absolute; inset: -4px; border: 4px solid #ed1c24; border-radius: 2px; }
.tip { position: absolute; z-index: 2; left: 8px; top: 28px; height: 25px; padding: 0 4px; font-size: 11px; line-height: 23px; border: 1px solid #bebebe; background: #fff; color: #575757; box-shadow: 1px 1px 3px #0003; }
</style>
